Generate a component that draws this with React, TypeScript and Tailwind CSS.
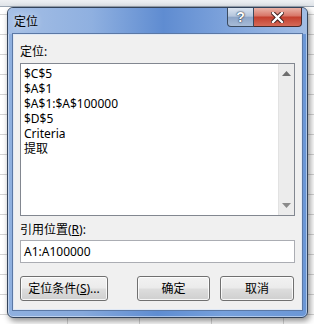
export default function App() {
  const lines = ["$C$5", "$A$1", "$A$1:$A$100000", "$D$5", "Criteria", "提取"];
  const btn =
    "h-[25px] rounded-[3px] border border-[#707070] bg-[linear-gradient(to_bottom,#f2f2f2_0%,#ebebeb_48%,#dddddd_52%,#cfcfcf_100%)] shadow-[inset_0_0_0_1px_rgba(255,255,255,0.8)] flex items-center justify-center leading-[14px]";
  return (
    <div className="w-[314px] h-[324px] overflow-hidden bg-white pl-[7px] pt-[7px] [background-image:linear-gradient(to_bottom,#eef0f3_0px,#dfe3e8_6px,#9ba6b3_6px,#9ba6b3_7px,transparent_7px),linear-gradient(to_right,#d4d4d4_1px,transparent_1px),linear-gradient(to_bottom,#d4d4d4_1px,transparent_1px)] [background-size:100%_7px,72px_100%,100%_20px] [background-repeat:no-repeat,repeat-x,repeat-y] [background-position:0_0,67px_0,0_14px]">
      <div className="w-[301px] h-[311px] rounded-[6px] border border-[#33435a] flex flex-col shadow-[inset_0_0_0_1px_rgba(255,255,255,0.45),2px_3px_6px_rgba(0,0,0,0.45)] bg-[linear-gradient(to_right,#8fb0df,#86a9dc_25%,#5f8dd2_50%,#76a0dc_72%,#6b97d6)] font-['Noto_Sans','Noto_Sans_CJK_SC',sans-serif] text-[12px] text-black">
        <div className="h-[26px] flex items-start justify-between shrink-0 bg-[linear-gradient(to_right,#a5bfe5,#8fb0e0_28%,#5f8cd1_52%,#7fa4dc_74%,#a2bde4)] rounded-t-[5px]">
          <span className="pl-[6px] pt-[5px] leading-[16px] font-['Noto_Sans_CJK_SC',sans-serif] [text-shadow:0_0_6px_rgba(255,255,255,0.9)]">
            定位
          </span>
          <div className="flex mr-[5px]">
            <div className="w-[27px] h-[19px] rounded-bl-[4px] border border-t-0 border-[#3a4a60] bg-[linear-gradient(to_bottom,#dbe4f0_0%,#b5c6dd_45%,#8ea6c8_52%,#a7bbd7_100%)] flex items-center justify-center text-white font-bold text-[14px] leading-none font-['Liberation_Sans',sans-serif] [text-shadow:0_0_1px_#1c2a3c,0_0_2px_#1c2a3c]">
              ?
            </div>
            <div className="w-[48px] h-[19px] rounded-br-[4px] border border-l-0 border-t-0 border-[#4a2a2a] bg-[linear-gradient(to_bottom,#eab3a8_0%,#d9786a_42%,#c4402f_52%,#d56a58_100%)] flex items-center justify-center">
              <svg width="13" height="11" viewBox="0 0 13 11">
                <path d="M2 1 L11 10 M11 1 L2 10" stroke="#3a1a18" strokeWidth="4.2" strokeLinecap="square" />
                <path d="M2 1 L11 10 M11 1 L2 10" stroke="#ffffff" strokeWidth="2.4" strokeLinecap="square" />
              </svg>
            </div>
          </div>
        </div>
        <div className="mx-[5px] mb-[7px] flex-1 bg-[#f0f0f0] border border-[#dfe8f5] shadow-[0_0_0_1px_#5b78a5] flex flex-col px-[6px]">
          <div className="pt-[9px] leading-[16px] h-[25px]">定位:</div>
          <div className="h-[153px] mt-[3px] border border-[#828790] bg-white flex">
            <div className="flex-1 pl-[3px] pt-[2px] leading-[15px]">
              {lines.map((l) => (
                <div key={l}>{l}</div>
              ))}
            </div>
            <div className="w-[16px] bg-[#ececec] border-l border-[#e2e2e2] flex flex-col justify-between items-center pt-[7px] pb-[7px]">
              <svg width="9" height="5" viewBox="0 0 9 5">
                <path d="M4.5 0 L9 5 L0 5 Z" fill="#6e6e6e" />
              </svg>
              <svg width="9" height="5" viewBox="0 0 9 5">
                <path d="M0 0 L9 0 L4.5 5 Z" fill="#8a8a8a" />
              </svg>
            </div>
          </div>
          <div className="mt-[6px] leading-[16px]">
            引用位置(<span className="underline">R</span>):
          </div>
          <div className="mt-[2px] h-[23px] border border-[#abadb3] bg-white flex items-center pl-[3px]">
            A1:A100000
          </div>
          <div className="mt-[13px] flex">
            <div className={`${btn} w-[88px]`}>
              定位条件(<span className="underline">S</span>)...
            </div>
            <div className={`${btn} w-[73px] ml-[29px] border-[#3c7fb1] shadow-[inset_0_0_0_1px_#bfe4f8]`}>
              确定
            </div>
            <div className={`${btn} w-[74px] ml-[10px]`}>取消</div>
          </div>
        </div>
      </div>
    </div>
  );
}
